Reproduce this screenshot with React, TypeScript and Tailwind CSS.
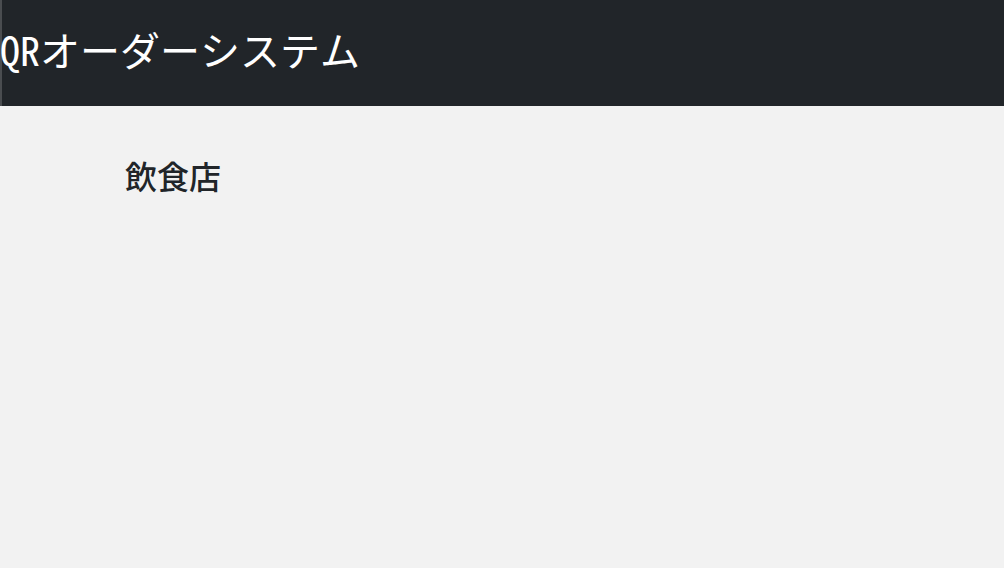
export default function App() {
  return (
    <div className="min-h-[568px] bg-[#f2f2f2] font-['Noto_Sans_CJK_JP',sans-serif]">
      <header className="h-[106px] bg-[#212529] border-l-2 border-[#4a4d50] flex items-center pb-[8px]">
        <h1 className="-ml-[2px] text-[40px] leading-none font-medium text-white font-['Noto_Sans_Mono_CJK_JP','Noto_Sans_CJK_JP',monospace]">
          QRオーダーシステム
        </h1>
      </header>
      <main className="pt-[50px] pl-[125px]">
        <h2 className="text-[32px] leading-[1.2] font-medium text-[#212529]">飲食店</h2>
      </main>
    </div>
  )
}
